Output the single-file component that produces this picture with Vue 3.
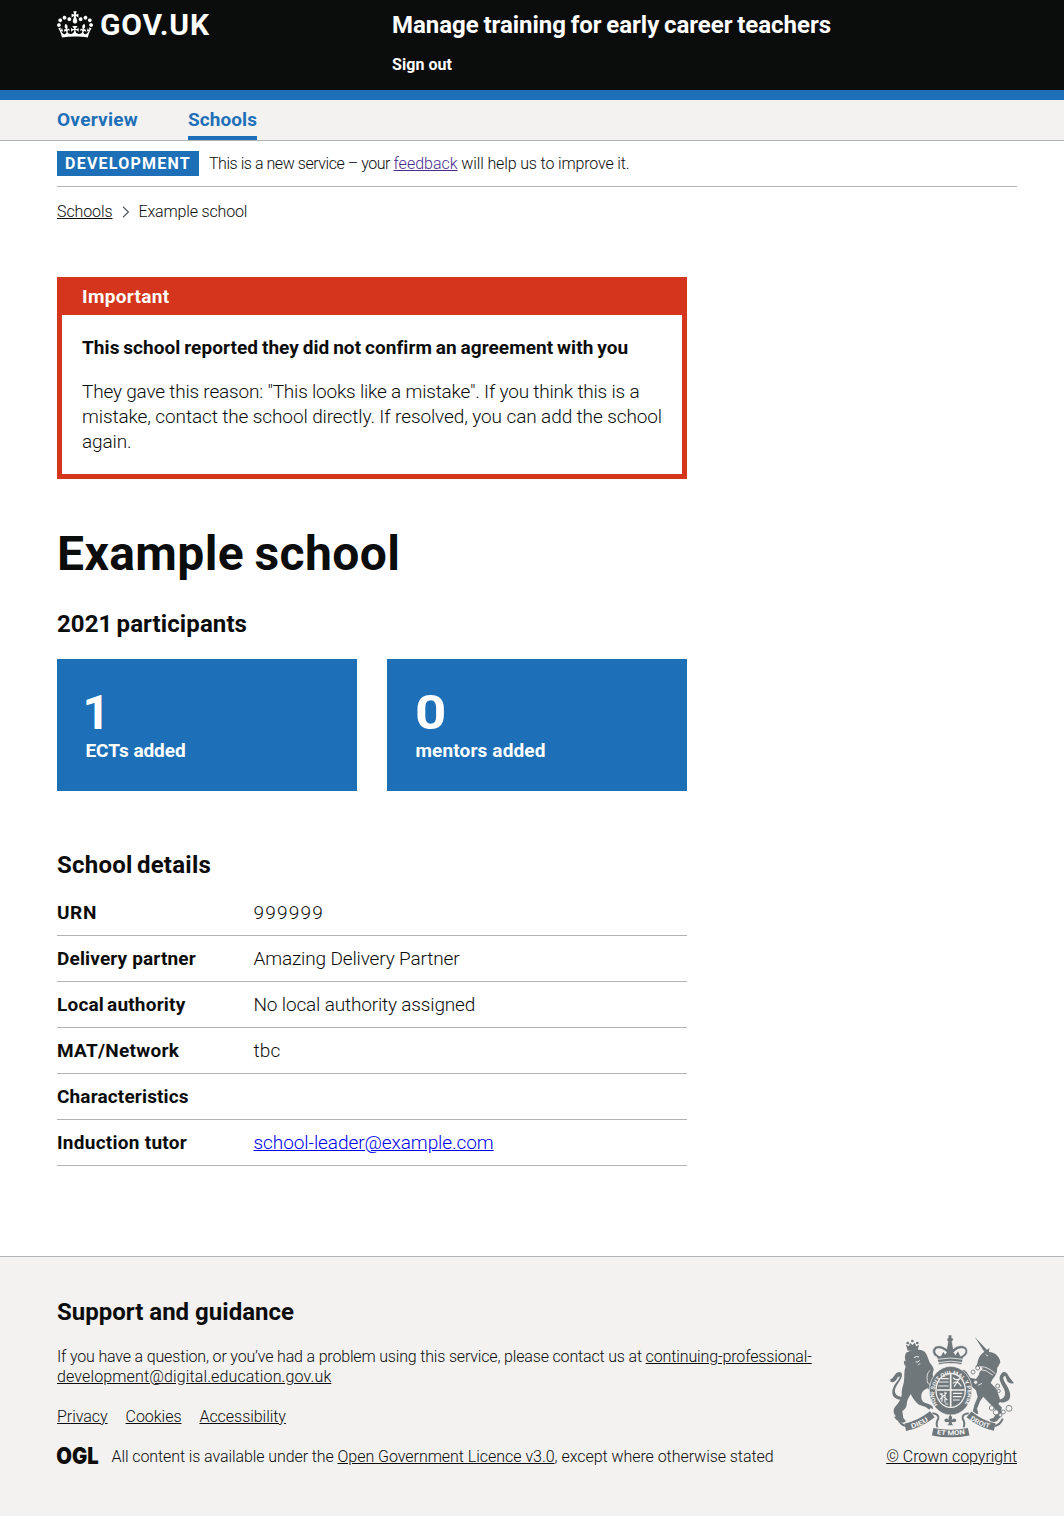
<script setup>
const stats = [
  { value: '1', label: 'ECTs added', kind: 'ects' },
  { value: '0', label: 'mentors added', kind: 'mentors' }
]

const details = [
  { key: 'URN', value: '999999', kind: 'urn' },
  { key: 'Delivery partner', value: 'Amazing Delivery Partner', kind: 'partner' },
  { key: 'Local authority', value: 'No local authority assigned', kind: 'authority' },
  { key: 'MAT/Network', value: 'tbc', kind: 'network' },
  { key: 'Characteristics', value: '', kind: 'traits' },
  { key: 'Induction tutor', value: 'school-leader@example.com', kind: 'tutor', email: true }
]
</script>

<template>
  <div class="page">
    <header class="header">
      <div class="container header-row">
        <a class="logo">
          <svg class="crown" viewBox="0 0 132 97" width="36" height="27" aria-hidden="true">
            <path fill="currentColor" fill-rule="evenodd" d="M25 30.2c3.5 1.5 7.7-.2 9.1-3.7 1.5-3.6-.2-7.8-3.9-9.2-3.6-1.4-7.6.3-9.1 3.9-1.4 3.5.3 7.5 3.9 9zM9 39.5c3.6 1.5 7.8-.2 9.2-3.7 1.5-3.6-.2-7.8-3.9-9.1-3.6-1.5-7.6.2-9.1 3.8-1.4 3.5.3 7.5 3.8 9zM4.4 57.2c3.5 1.5 7.7-.2 9.1-3.8 1.5-3.6-.2-7.7-3.9-9.1-3.5-1.5-7.6.3-9.1 3.8-1.4 3.5.3 7.6 3.9 9.1zm38.3-21.4c3.5 1.5 7.7-.2 9.1-3.8 1.5-3.6-.2-7.7-3.9-9.1-3.6-1.5-7.6.3-9.1 3.8-1.3 3.6.4 7.7 3.9 9.1zm64.4-5.6c-3.6 1.5-7.8-.2-9.1-3.7-1.5-3.6.2-7.8 3.8-9.2 3.6-1.4 7.7.3 9.2 3.9 1.3 3.5-.4 7.5-3.9 9zm15.9 9.3c-3.6 1.5-7.7-.2-9.1-3.7-1.5-3.6.2-7.8 3.7-9.1 3.6-1.5 7.7.2 9.2 3.8 1.5 3.5-.3 7.5-3.8 9zm4.7 17.7c-3.6 1.5-7.8-.2-9.2-3.8-1.5-3.6.2-7.7 3.9-9.1 3.6-1.5 7.7.3 9.2 3.8 1.3 3.5-.4 7.6-3.9 9.1zM89.3 35.8c-3.6 1.5-7.8-.2-9.2-3.8-1.4-3.6.2-7.7 3.9-9.1 3.6-1.5 7.7.3 9.2 3.8 1.4 3.6-.3 7.7-3.9 9.1zM69.7 17.7l8.9 4.7V9.3l-8.9 2.8c-.2-.3-.5-.6-.9-.9L72.4 0H59.6l3.5 11.2c-.3.3-.6.5-.9.9l-8.8-2.8v13.1l8.8-4.7c.3.3.6.7.9.9l-5 15.4v.1c-.2.8-.4 1.6-.4 2.4 0 4.1 3.1 7.5 7 8.1h.2c.3 0 .7.1 1 .1.4 0 .7 0 1-.1h.2c4-.6 7.1-4.1 7.1-8.1 0-.8-.1-1.7-.4-2.4V34l-5.1-15.4c.4-.2.7-.6 1-.9zM66 92.8c16.9 0 32.8 1.1 47.1 3.2 4-16.9 8.9-26.7 14-33.5l-9.6-3.4c1 4.9 1.1 7.2 0 10.2-1.5-1.4-3-4.3-4.2-8.7L108.6 76c2.8-2 5-3.2 7.5-3.3-4.4 9.4-10 11.9-13.6 11.2-4.3-.8-6.3-4.6-5.6-7.9 1-4.7 5.7-5.9 8-.5 4.3-8.7-3-11.4-7.6-8.8 7.1-7.2 7.9-13.5 2.1-21.1-8 6.1-8.1 12.3-4.5 20.8-4.7-5.4-12.1-2.5-9.5 6.2 3.4-5.2 7.9-2 7.2 3.1-.6 4.3-6.4 7.8-13.5 7.2-10.3-.9-10.9-8-11.2-13.8 2.5-.5 7.1 1.8 11 7.3L80.2 60c-4.1 4.4-8 5.3-12.3 5.4 1.4-4.4 8-11.6 8-11.6H55.5s6.4 7.2 7.9 11.6c-4.2-.1-8-1-12.3-5.4l1.4 16.4c3.9-5.5 8.5-7.7 10.9-7.3-.3 5.8-.9 12.8-11.1 13.8-7.2.6-12.9-2.9-13.5-7.2-.7-5 3.8-8.3 7.1-3.1 2.7-8.7-4.6-11.6-9.4-6.2 3.7-8.5 3.6-14.7-4.6-20.8-5.8 7.6-5 13.9 2.2 21.1-4.7-2.6-11.9.1-7.7 8.8 2.3-5.5 7.1-4.2 8.1.5.7 3.3-1.3 7.1-5.7 7.9-3.5.7-9-1.8-13.5-11.2 2.5.1 4.7 1.3 7.5 3.3l-4.7-15.4c-1.2 4.4-2.7 7.2-4.3 8.7-1.1-3-.9-5.3 0-10.2l-9.5 3.4c5 6.9 9.9 16.7 14 33.5 14.8-2.1 30.8-3.2 47.7-3.2z" />
          </svg>
          <span class="logo-text">GOV.UK</span>
        </a>
        <div class="header-content">
          <a class="service-name">Manage training for early career teachers</a>
          <a class="sign-out">Sign out</a>
        </div>
      </div>
    </header>

    <nav class="nav">
      <div class="container nav-row">
        <a class="nav-item overview">Overview</a>
        <a class="nav-item schools active">Schools</a>
      </div>
    </nav>

    <div class="container">
      <div class="phase">
        <strong class="tag">DEVELOPMENT</strong>
        <span class="phase-text"><span class="pt-start">This is a new service – your </span><a class="feedback">feedback</a><span class="pt-end"> will help us to improve it.</span></span>
      </div>

      <div class="crumbs">
        <a class="crumb-link">Schools</a>
        <svg class="chevron" width="8" height="12" viewBox="0 0 8 12" aria-hidden="true"><path d="M1 .8 6.4 6 1 11.2" fill="none" stroke="#505a5f" stroke-width="1.2" /></svg>
        <span class="crumb-current">Example school</span>
      </div>

      <main class="main">
        <section class="notice">
          <h2 class="notice-title">Important</h2>
          <div class="notice-body">
            <p class="notice-heading">This school reported they did not confirm an agreement with you</p>
            <p class="notice-text"><span class="n1">They gave this reason: "This looks like a mistake". If you think this is a</span><br><span class="n2">mistake, contact the school directly. If resolved, you can add the school</span><br><span class="n2">again.</span></p>
          </div>
        </section>

        <h1 class="title">Example school</h1>
        <h2 class="subtitle participants">2021 participants</h2>

        <div class="cards">
          <div v-for="s in stats" :key="s.label" class="card" :class="s.kind">
            <span class="number">{{ s.value }}</span>
            <span class="label">{{ s.label }}</span>
          </div>
        </div>

        <h2 class="subtitle details-title">School details</h2>
        <dl class="details">
          <div v-for="d in details" :key="d.key" class="row" :class="d.kind">
            <dt>{{ d.key }}</dt>
            <dd><a v-if="d.email" class="mail">{{ d.value }}</a><template v-else>{{ d.value }}</template></dd>
          </div>
        </dl>
      </main>
    </div>

    <footer class="footer">
      <div class="container footer-row">
        <div class="footer-main">
          <h2 class="subtitle support">Support and guidance</h2>
          <p class="contact"><span class="c1">If you have a question, or you’ve had a problem using this service, please contact us at </span><a class="c2">continuing-professional-</a><br><a class="c3">development@digital.education.gov.uk</a></p>
          <div class="footer-links">
            <a class="privacy">Privacy</a>
            <a class="cookies">Cookies</a>
            <a class="access">Accessibility</a>
          </div>
          <div class="licence">
            <svg class="ogl" width="41" height="17" viewBox="0 0 41 17" aria-hidden="true">
              <text x="-0.8" y="16.5" textLength="42.4" lengthAdjust="spacingAndGlyphs">OGL</text>
            </svg>
            <span><span class="l1">All content is available under the </span><a class="l2">Open Government Licence v3.0</a><span class="l3">, except where otherwise stated</span></span>
          </div>
        </div>

        <div class="copyright">
          <svg class="crest" viewBox="54 42 390 312" width="130" height="104" aria-hidden="true">
            <defs>
              <path id="garter" d="M206 258A50 56 0 1 1 280 258" />
              <path id="scroll-left" d="M122 326Q156 318 184 296" />
              <path id="scroll-mid" d="M197 341Q242 351 290 341" />
              <path id="scroll-right" d="M297 297Q324 318 366 327" />
            </defs>
            <g class="ink">
              <!-- lion -->
              <path d="M113 92 108 74l9 5 3-11 7 7 8-7 3 11 9-4-4 17z" />
              <circle cx="127" cy="63" r="4" /><circle cx="113" cy="69" r="4" /><circle cx="142" cy="69" r="4" />
              <path d="M114 96c12-7 38-10 50-1 7 7 9 17 13 27 3 10 13 16 14 26l-3 15 4 22c5 9 11 13 13 21-8-5-15-8-20-10 6 12 10 20 6 29-5-8-12-15-18-20-9 3-18 10-19 21-1 8 1 15 7 21 11 5 20 6 26 11l3 10-8-4-4 5-11-8-20-7c-11-8-20-21-25-32-7 12-12 22-12 33-1 9-8 14-13 19l3 20 8 10-8 4-10-2-10-6-8-9 6-2c-8-7-9-17-5-25 8-12 20-22 22-40-1-16 5-27 7-40 2-14-1-30 5-45-5-6-6-12-5-17l5 2c-3-9-3-16 0-23l3-4z" />
              <path d="M104 231C74 232 70 215 79 199c7-13 17-24 17-34 0-12-15-11-21-1-5 8-11 14-17 16l6 2-4 3c13 5 20-4 23-13l6-3c0 9-11 18-17 29-12 23-3 42 24 41z" />
              <!-- unicorn -->
              <path d="M314 50 352 91l-7 8z" />
              <path d="M322 132c2-18 10-30 24-38l12-10-1 12c20 1 33 16 34 31l-6 12-4 5c2 13-4 23-13 33l-6 12 17 17 9 25 3 13-6 8 10 10-1 27-14 15-16 5-6-11 13-5 9-15-9-16-16-15-15-17-10 14-9 22 4 14-8 6-10-7 6-24 10-24-5-20-14-12-16-8-9-18-10-6 2-14 11-4 8 7 11 17 17 4 8-11c2-9 5-15 12-20l-7-8-9 6-6-3z" />
              <path d="M379 239c24 2 31-14 23-32-9-19-20-32-8-46 8-9 17-4 21 6l17 23c-13 2-21-4-23-14l-3-8c-10 1-6 12 1 23 13 19 21 43 4 53-10 6-22 4-32-5z" />
              <!-- garter and royal crown -->
              <ellipse class="cased" cx="242" cy="212" rx="64" ry="73" />
              <path class="cased" d="M206 134 201 112C182 104 184 79 204 77c12-1 20 5 26 9l4-22c-5-3-4-10 1-11l-1-8h12l-1 8c6 1 7 8 1 11l4 22c8-6 15-10 28-9 19 3 20 27 2 35l-5 22c-22-5-45-5-70 0z" />
            </g>
            <g class="paper">
              <ellipse cx="242" cy="211" rx="46" ry="53" />
              <path class="line" d="M202 118q40-8 77 0M203 128q40-9 76 0" />
              <path d="M209 109c-18-7-16-23-4-24 12-1 20 7 26 12l-8 10zM273 109c18-7 17-23 4-24-13-1-20 7-27 12l8 10z" />
              <path class="line thick" d="M137 126q8 2 12-5M144 136l6-6M132 113q8-6 15-2" />
              <path class="line" d="M180 151q-12 11-8 31M181 194q-8-1-10-11M332 140q22 0 44 21M326 148q24 0 43 18M347 104l7 4M336 190l-12 6" />
            </g>
            <g class="ink">
              <ellipse cx="242" cy="211" rx="42" ry="49" />
              <path d="M212 110l8-15 8 14 8-11 5-10 7 12 7 8 9-14 7 15q-29-5-59 1z" />
            </g>
            <g class="quarterings">
              <path class="cross" d="M242 162v98M200 210h84" />
              <path d="M213 176h23M207 186h29M205 198h31M249 173q7 10 18 3M249 190q12-12 25 9M252 200l17-25M209 220l23 20M210 238l20-20M216 219v26M225 215v33M249 220h28M249 230h26M249 240h20M234 252h-8" />
            </g>
            <g class="scroll">
              <path class="casing" d="M106 324Q148 316 186 284M298 284Q332 314 374 322" />
              <path d="M106 322Q148 314 187 283M297 283Q332 312 374 321" />
              <path class="fold" d="M84 296Q92 318 112 318M398 296Q390 318 370 318M187 280q21 2 18 16-8 12-3 27M296 280q-21 2-18 16 8 12 3 27" />
              <path class="casing" d="M188 335Q242 346 296 335" />
              <path d="M188 335Q242 346 296 335" />
            </g>
            <g class="ink">
              <path d="M241 284q8 7 4 15 11-8 14 1 0 8-9 6l-5 1q0 6 5 9h-18q5-3 5-9l-5-1q-9 2-9-6 3-9 14-1-4-8 4-15z" />
            </g>
            <g class="chain">
              <circle cx="323" cy="144" r="6" /><circle cx="309" cy="156" r="6" /><circle cx="317" cy="187" r="6" />
              <circle cx="383" cy="198" r="6" /><circle cx="386" cy="213" r="5" /><circle cx="365" cy="264" r="7" />
              <circle cx="378" cy="277" r="8" /><circle cx="400" cy="276" r="6" /><circle cx="417" cy="265" r="9" />
              <circle cx="391" cy="285" r="5" />
            </g>
            <g class="motto">
              <text class="garter-text"><textPath href="#garter" startOffset="4" textLength="236" lengthAdjust="spacingAndGlyphs">HONI SOIT QUI MAL Y PENSE</textPath></text>
              <text><textPath href="#scroll-left" startOffset="3" textLength="56" lengthAdjust="spacingAndGlyphs">DIEU</textPath></text>
              <text><textPath href="#scroll-mid" startOffset="3" textLength="86" lengthAdjust="spacingAndGlyphs">ET MON</textPath></text>
              <text><textPath href="#scroll-right" startOffset="3" textLength="64" lengthAdjust="spacingAndGlyphs">DROIT</textPath></text>
            </g>
          </svg>
          <a class="crown-copy">© Crown copyright</a>
        </div>
      </div>
    </footer>
  </div>
</template>

<style>
body {
  margin: 0;
  background: #fff;
}
</style>

<style scoped>
.page {
  width: 1064px;
  color: #0b0c0c;
  font-family: Roboto, "Liberation Sans", sans-serif;
  font-size: 16px;
  font-weight: 300;
  line-height: 20px;
  white-space: nowrap;
}
.page span, .page a { white-space: pre; }
h1, h2, p, dl, dt, dd { margin: 0; }
.container { width: 960px; margin-left: 57px; }

.header { height: 90px; background: #0b0c0c; border-bottom: 10px solid #1d70b8; color: #fff; }
.header-row { display: flex; padding-top: 10px; }
.logo { display: flex; width: 335px; height: 30px; }
.crown { margin-top: 1px; }
.logo-text { margin-left: 7px; font-size: 30px; font-weight: 700; line-height: 30px; letter-spacing: .85px; }
.header-content { display: flex; flex-direction: column; }
.service-name { font-size: 24px; font-weight: 700; line-height: 30px; letter-spacing: -.02px; word-spacing: -1.2px; }
.sign-out { margin-top: 15px; font-weight: 700; letter-spacing: .05px; }

.nav { height: 40px; background: #f3f2f1; border-bottom: 1px solid #b1b4b6; }
.nav-row { display: flex; gap: 50px; }
.nav-item { box-sizing: border-box; height: 40px; padding-top: 7px; color: #1d70b8; font-size: 19px; font-weight: 700; line-height: 25px; }
.overview { width: 81px; letter-spacing: .27px; }
.schools { width: 69px; letter-spacing: .07px; }
.active { border-bottom: 4px solid #1d70b8; }

.phase { display: flex; gap: 10px; padding: 10px 0; border-bottom: 1px solid #b1b4b6; line-height: 25px; }
.tag { box-sizing: border-box; width: 142px; padding-left: 8px; background: #1d70b8; color: #fff; font-weight: 700; letter-spacing: 1.24px; }
.pt-start { letter-spacing: -.45px; }
.feedback { color: #4c2c92; letter-spacing: 0; text-decoration: underline; }
.pt-end { letter-spacing: -.14px; }

.crumbs { display: flex; align-items: center; height: 20px; margin-top: 15px; }
.crumb-link { width: 55.5px; letter-spacing: -.1px; text-decoration: underline; }
.chevron { margin: 0 9px; }
.crumb-current { letter-spacing: -.16px; }

.main { width: 630px; padding-bottom: 90px; }
.notice { margin-top: 55px; border: 5px solid #d4351c; }
.notice-title { padding: 2px 20px 6px; background: #d4351c; color: #fff; font-size: 19px; line-height: 25px; letter-spacing: .33px; }
.notice-body { padding: 20px; font-size: 19px; line-height: 25px; }
.notice-heading { font-weight: 700; letter-spacing: .07px; word-spacing: -1px; }
.notice-text { margin-top: 19px; }
.n1 { letter-spacing: -.195px; }
.n2 { letter-spacing: -.105px; }

.title { margin-top: 50px; font-size: 48px; line-height: 50px; letter-spacing: .4px; word-spacing: -2px; }
.subtitle { font-size: 24px; font-weight: 700; line-height: 30px; }
.participants { margin-top: 30px; letter-spacing: .1px; word-spacing: -2px; }
.cards { display: flex; gap: 30px; margin-top: 20px; }
.card { display: flex; flex-direction: column; box-sizing: border-box; width: 300px; height: 132px; padding: 29px 28.5px 0; background: #1d70b8; color: #fff; font-weight: 700; }
.number { font-size: 48px; line-height: 50px; }
.ects .number { margin-left: -3px; }
.mentors .number { margin-left: -1px; transform: scaleX(1.14); transform-origin: 0 0; }
.label { font-size: 19px; line-height: 25px; }
.ects .label { letter-spacing: -.08px; }
.mentors .label { letter-spacing: .14px; }

.details-title { margin-top: 59px; letter-spacing: .25px; word-spacing: -2px; }
.details { margin-top: 10px; font-size: 19px; line-height: 25px; }
.row { display: flex; box-sizing: border-box; height: 46px; padding-top: 10px; border-bottom: 1px solid #b1b4b6; }
.row dt { width: 196.5px; font-weight: 700; letter-spacing: .15px; }
.urn dt { letter-spacing: .6px; }
.network dt { letter-spacing: .28px; }
.tutor dt { letter-spacing: .27px; }
.authority dt { letter-spacing: .2px; word-spacing: -2px; }
.urn dd { letter-spacing: 1.2px; }
.partner dd { letter-spacing: -.14px; }
.authority dd { letter-spacing: -.16px; }
.network dd { letter-spacing: .2px; }
.mail { color: #00e; letter-spacing: -.07px; text-decoration: underline; }

.footer { height: 259px; background: #f3f2f1; border-top: 1px solid #b1b4b6; }
.footer-row { display: flex; justify-content: space-between; padding-top: 40px; }
.support { letter-spacing: .01px; }
.contact { margin-top: 20px; }
.c1 { letter-spacing: -.17px; }
.c2 { letter-spacing: -.12px; }
.c3 { letter-spacing: .13px; }
.c2, .c3, .footer-links a, .l2, .crown-copy { text-decoration: underline; }
.footer-links { display: flex; gap: 18px; margin-top: 20px; letter-spacing: -.04px; }
.licence { display: flex; margin-top: 20px; }
.ogl { margin-right: 13.5px; font: 900 22.5px Inter, sans-serif; fill: #0b0c0c; overflow: visible; }
.l1 { letter-spacing: -.09px; }
.l2 { letter-spacing: -.03px; }
.l3 { letter-spacing: -.05px; }

.copyright { display: flex; flex-direction: column; align-items: flex-end; padding-top: 37px; }
.crest { margin-right: -1px; }
.crown-copy { margin-top: 9px; letter-spacing: -.04px; }
.ink { fill: #6f777b; }
.cased { stroke: #f3f2f1; stroke-width: 2; }
.paper { fill: #f3f2f1; }
.line { fill: none; stroke: #f3f2f1; stroke-width: 2.5; }
.thick { stroke-width: 3; }
.quarterings { fill: none; stroke: #f3f2f1; stroke-width: 3.5; }
.cross { stroke-width: 5; }
.scroll { fill: none; stroke: #6f777b; stroke-width: 23; }
.scroll .casing { stroke: #f3f2f1; stroke-width: 29; }
.scroll .fold { stroke-width: 6; }
.chain { fill: #f3f2f1; stroke: #6f777b; stroke-width: 2.5; }
.motto { fill: #f3f2f1; font: 700 20px Roboto, sans-serif; }
.garter-text { font-size: 17px; }
</style>
